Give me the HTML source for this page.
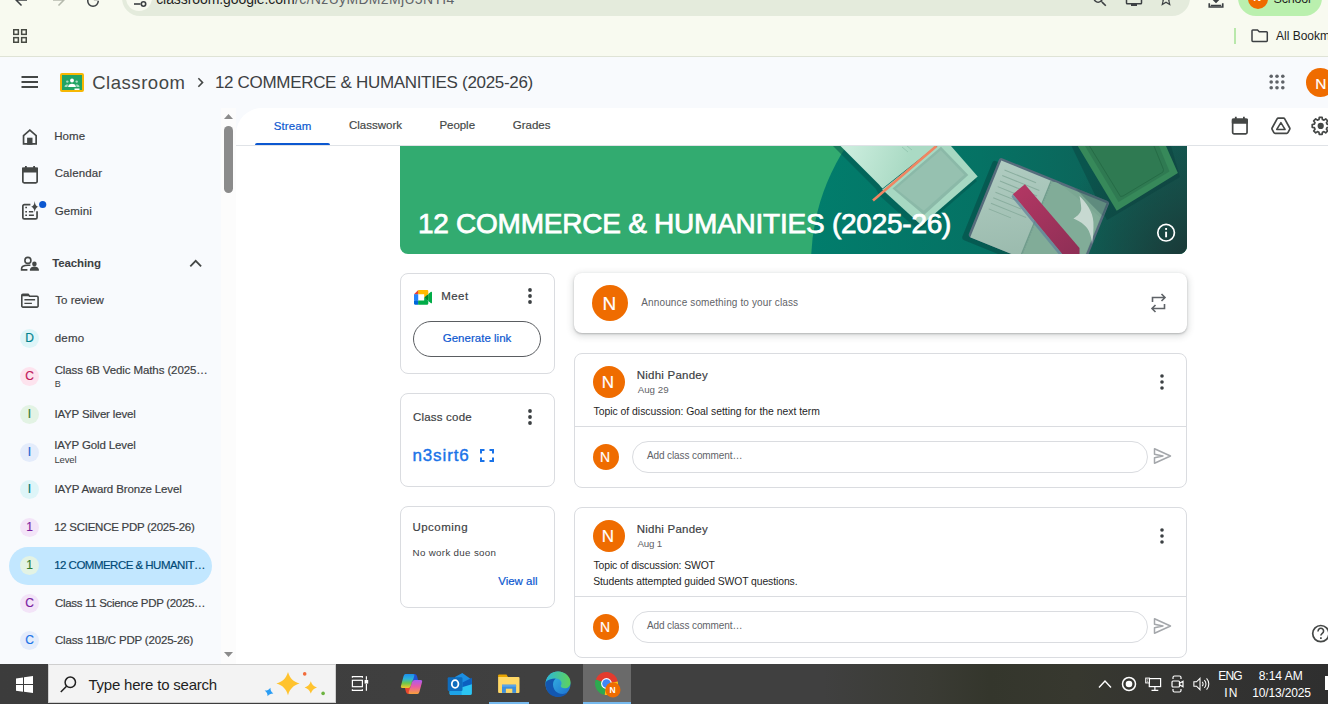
<!DOCTYPE html>
<html lang="en">
<head>
<meta charset="utf-8">
<title>12 COMMERCE &amp; HUMANITIES (2025-26)</title>
<style>
*{box-sizing:border-box;margin:0;padding:0}
html,body{width:1328px;height:704px;overflow:hidden;background:#fff}
body{position:relative;font-family:"Liberation Sans",sans-serif;color:#1f1f1f}
.abs,.t,svg.i{position:absolute}
.t{white-space:nowrap;line-height:0;display:block}
.b{font-weight:700}
.m{-webkit-text-stroke:.18px}
.m2{-webkit-text-stroke:.75px}
.m3{-webkit-text-stroke:.4px}
/* browser chrome */
#chrome{left:0;top:0;width:1328px;height:56px;background:#f8faf0}
#chromeline{left:0;top:56px;width:1328px;height:1px;background:#dfe3d6}
#urlpill{left:122px;top:-20px;width:1068px;height:36px;border-radius:18px;background:#e4ebdc}
#urlic{left:126px;top:-15px;width:26px;height:26px;border-radius:13px;background:#f8faf0}
#profpill{left:1238px;top:-20px;width:84px;height:36px;border-radius:18px;background:#baf0ae}
#profav{left:1248px;top:-11px;width:20px;height:20px;border-radius:50%;background:#ef6c00}
#bmsep{left:1234px;top:28px;width:2px;height:16px;background:#b9e8ab}
/* app */
#app{left:0;top:57px;width:1328px;height:607px;background:#f8fafd}
#track{left:221px;top:108px;width:15px;height:556px;background:#fcfcfc}
#thumb{left:224px;top:126px;width:9px;height:67px;border-radius:4.5px;background:#8b8b8b}
#main{left:236px;top:108px;width:1092px;height:556px;background:#fff;border-top-left-radius:26px}
#tabline{left:236px;top:145px;width:1092px;height:1px;background:#e0e3e7}
#tabsel{left:255px;top:143px;width:75px;height:2px;border-radius:2px 2px 0 0;background:#0b57d0}
#selpill{left:9px;top:547px;width:203px;height:38px;border-radius:19px;background:#c2e7ff}
.cir{position:absolute;width:19px;height:19px;border-radius:50%;left:20px}
.av{position:absolute;border-radius:50%;background:#ef6c00}
.card{position:absolute;background:#fff;border:1px solid #dadce0;border-radius:8px}
.hr{position:absolute;height:1px;background:#dadce0}
.inp{position:absolute;border:1px solid #dadce0;border-radius:16px;height:32px;background:#fff}
#ann{left:574px;top:273px;width:613px;height:60px;border-radius:8px;background:#fff;box-shadow:0 1px 2px rgba(60,64,67,.3),0 2px 6px 2px rgba(60,64,67,.15)}
#genbtn{left:413px;top:321px;width:128px;height:36px;border-radius:18px;border:1px solid #5a5d61;background:#fff}
/* taskbar */
#tb{left:0;top:664px;width:1328px;height:40px;background:linear-gradient(90deg,#3c3c3c 0,#404040 40%,#404040 62%,#3a3b34 70%,#34362c 74.500%,#37382f 81%,#343432 88%,#2f2f2f 100%)}
#tbsearch{left:48px;top:664px;width:288px;height:39px;background:#f3f3f3;border:1px solid #cfcfcf}
#tbactive{left:583px;top:664px;width:48px;height:40px;background:#6a6a6a}
.ul{position:absolute;height:2px;top:702px;background:#76b9ed}
</style>
</head>
<body>
<!-- ===== browser chrome ===== -->
<div id="chrome" class="abs"></div>
<div id="urlpill" class="abs"></div>
<div id="urlic" class="abs"></div>
<div id="profpill" class="abs"></div>
<div id="profav" class="abs"></div>
<div id="bmsep" class="abs"></div>
<div id="chromeline" class="abs"></div>
<!-- back / forward / reload (mostly cropped) -->
<svg class="i" style="left:12px;top:-9.500px" width="18" height="18" viewBox="0 0 24 24"><path d="M20 11H7.83l5.59-5.59L12 4l-8 8 8 8 1.41-1.41L7.83 13H20z" fill="#3c4043"/></svg>
<svg class="i" style="left:50px;top:-9.500px" width="18" height="18" viewBox="0 0 24 24"><path d="M12 4l-1.41 1.41L16.17 11H4v2h12.17l-5.58 5.59L12 20l8-8z" fill="#b5b9ad"/></svg>
<svg class="i" style="left:84px;top:-8.500px" width="18" height="18" viewBox="0 0 24 24"><path d="M17.65 6.35A7.96 7.96 0 0012 4a8 8 0 108 8h-2a6 6 0 11-6-6c1.66 0 3.14.69 4.22 1.78L13 11h7V4z" fill="#3c4043"/></svg>
<svg class="i" style="left:132px;top:-7px" width="16" height="16" viewBox="0 0 16 16"><circle cx="11.5" cy="11" r="2.2" fill="none" stroke="#3c4043" stroke-width="1.6"/><path d="M2 11h6.5" stroke="#3c4043" stroke-width="1.6"/></svg>
<!-- right-side url icons -->
<svg class="i" style="left:1091px;top:-9px" width="18" height="18" viewBox="0 0 24 24"><path d="M15.5 14h-.79l-.28-.27A6.47 6.47 0 0016 9.5 6.5 6.5 0 109.5 16c1.61 0 3.09-.59 4.23-1.57l.27.28v.79l5 4.99L20.490 19zm-6 0C7.010 14 5 11.990 5 9.500S7.010 5 9.500 5 14 7.010 14 9.500 11.990 14 9.500 14z" fill="#3c4043"/></svg>
<svg class="i" style="left:1125px;top:-9.500px" width="18" height="18" viewBox="0 0 24 24"><path d="M21 3H3a2 2 0 00-2 2v11a2 2 0 002 2h5v2h8v-2h5a2 2 0 002-2V5a2 2 0 00-2-2zm0 13H3V5h18z" fill="#3c4043"/></svg>
<svg class="i" style="left:1157px;top:-10px" width="18" height="18" viewBox="0 0 24 24"><path d="M22 9.24l-7.19-.62L12 2 9.190 8.630 2 9.240l5.460 4.730L5.820 21 12 17.270 18.180 21l-1.630-7.030zM12 15.400l-3.760 2.270 1-4.280-3.320-2.880 4.380-.38L12 6.100l1.710 4.040 4.380.38-3.320 2.880 1 4.280z" fill="#3c4043"/></svg>
<svg class="i" style="left:1207px;top:-8.500px" width="18" height="18" viewBox="0 0 24 24"><path d="M5 20h14v-2H5zM19 9h-4V3H9v6H5l7 7z" fill="#3c4043" transform="translate(0,-1)"/><path d="M3 15v5h18v-5" fill="none" stroke="#3c4043" stroke-width="2.2"/></svg>
<!-- bookmarks bar -->
<svg class="i" style="left:13px;top:29px" width="14" height="14" viewBox="0 0 14 14" fill="none" stroke="#474a43" stroke-width="1.5"><rect x=".75" y=".75" width="4.6" height="4.6"/><rect x="8.65" y=".75" width="4.6" height="4.600"/><rect x=".75" y="8.65" width="4.6" height="4.6"/><rect x="8.65" y="8.65" width="4.6" height="4.6"/></svg>
<svg class="i" style="left:1251px;top:29px" width="18" height="14" viewBox="0 0 18 14"><path d="M1.8 1h4.700l1.800 1.800h7.200a.8.800 0 01.800.8v8a.8.800 0 01-.8.800H1.800a.8.800 0 01-.8-.8V1.800a.8.800 0 01.8-.8z" fill="none" stroke="#3c4043" stroke-width="1.5"/></svg>

<!-- ===== app ===== -->
<div id="app" class="abs"></div>
<div id="track" class="abs"></div>
<div id="thumb" class="abs"></div>
<div id="main" class="abs"></div>
<div id="tabline" class="abs"></div>
<div id="tabsel" class="abs"></div>
<div id="selpill" class="abs"></div>
<!-- header -->
<svg class="i" style="left:21px;top:76px" width="18" height="12" viewBox="0 0 18 12"><path d="M.5 1h16.500M.5 6h16.500M.5 11h16.500" stroke="#444746" stroke-width="1.900"/></svg>
<svg class="i" style="left:60px;top:73px" width="24" height="19" viewBox="0 0 24 19"><rect width="24" height="19" rx="2" fill="#f6b704"/><rect x="2" y="2" width="20" height="15" fill="#21a465"/><circle cx="12" cy="7.500" r="1.900" fill="#fff"/><path d="M8.200 13.200c0-1.700 2.500-2.500 3.800-2.500s3.800.8 3.800 2.500v.8H8.200z" fill="#fff"/><circle cx="7.300" cy="8.600" r="1.200" fill="#a8dcc0"/><circle cx="16.700" cy="8.600" r="1.200" fill="#a8dcc0"/><path d="M4.600 13.200c0-1.200 1.700-1.800 2.700-1.800.4 0 .9.100 1.300.2-.7.500-1.100 1.100-1.100 1.900v.5H4.600zM19.400 13.200c0-1.200-1.700-1.800-2.700-1.800-.4 0-.9.100-1.300.2.700.500 1.100 1.100 1.100 1.900v.5h2.900z" fill="#a8dcc0"/><rect x="14.500" y="15.500" width="5" height="1.500" fill="#fff"/></svg>
<svg class="i" style="left:191px;top:73px" width="19" height="19" viewBox="0 0 24 24"><path d="M10 6L8.590 7.410 13.170 12l-4.580 4.590L10 18l6-6z" fill="#444746"/></svg>
<svg class="i" style="left:1269px;top:74px" width="16" height="16" viewBox="0 0 16 16" fill="#5f6368"><circle cx="2.200" cy="2.200" r="1.800"/><circle cx="8" cy="2.200" r="1.800"/><circle cx="13.800" cy="2.200" r="1.800"/><circle cx="2.200" cy="8" r="1.800"/><circle cx="8" cy="8" r="1.800"/><circle cx="13.800" cy="8" r="1.800"/><circle cx="2.200" cy="13.800" r="1.800"/><circle cx="8" cy="13.800" r="1.800"/><circle cx="13.800" cy="13.800" r="1.800"/></svg>
<div class="av" style="left:1306px;top:67.900px;width:28.800px;height:28.800px"></div>
<!-- scrollbar arrows -->
<svg class="i" style="left:224px;top:114px" width="9" height="5" viewBox="0 0 9 5"><path d="M0 5L4.500 0 9 5z" fill="#8b8b8b"/></svg>
<svg class="i" style="left:224px;top:652px" width="9" height="5" viewBox="0 0 9 5"><path d="M0 0L4.500 5 9 0z" fill="#8b8b8b"/></svg>
<!-- sidebar icons -->
<svg class="i" style="left:0;top:108px" width="222" height="220" viewBox="0 108 222 220" fill="none" stroke="#444746" stroke-width="1.700">
<!-- home -->
<path d="M23.550 143.950V135.600L29.850 130.100 36.150 135.600V143.950z"/><rect x="27.100" y="137.700" width="5.400" height="7" fill="#444746" stroke="none"/>
<!-- calendar -->
<rect x="22.850" y="168.300" width="14.300" height="14.600" rx="1.300"/><path d="M22.850 168.300h14.300v3.400h-14.300z" fill="#444746"/><path d="M25.900 166v2.500M34.100 166v2.500" stroke-width="1.800"/>
<!-- gemini -->
<path d="M30.400 204.650H24.300a1.450 1.450 0 00-1.450 1.450v11.300a1.450 1.450 0 001.450 1.450h11.300a1.450 1.450 0 001.450-1.450V211.200"/>
<path d="M25.300 206.800h1.700v1.500h-1.700zM25.300 210.900h1.700v1.500h-1.700zM25.300 214.500h1.700v1.500h-1.700zM28.900 211h4.300v1.400h-4.300zM28.900 214.500h5v1.500h-5z" fill="#444746" stroke="none"/>
<path d="M34.700 200.900c.45 3.900 1.500 5.300 4 5.900-2.500.6-3.550 2-4 5.400-.45-3.400-1.500-4.800-4-5.400 2.500-.6 3.550-2 4-5.900z" fill="#444746" stroke="none"/>
<circle cx="42.700" cy="204.500" r="3.600" fill="#0b57d0" stroke="none"/>
<!-- teaching -->
<circle cx="27.900" cy="260.400" r="3" stroke-width="1.600"/>
<path d="M27.400 269.900H21.600v-1.300c0-2.300 3.300-3.400 6.300-3.400h2.500" stroke-width="1.600"/>
<circle cx="34.400" cy="263.900" r="2.300" fill="#444746" stroke="none"/>
<path d="M29.900 270.700v-1c0-2.100 2.700-3.300 4.500-3.300s4.500 1.200 4.500 3.300v1z" fill="#444746" stroke="none"/>
<!-- to review -->
<path d="M21.800 295.500a1.100 1.100 0 011.100-1.100h5.200l1.600 1.900h7.300a1.100 1.100 0 011.100 1.100v8.600a1.100 1.100 0 01-1.100 1.100H22.900a1.100 1.100 0 01-1.100-1.100z" stroke-width="1.600"/>
<path d="M21.800 296.300V294.400h6.300l1.600 1.900z" fill="#444746" stroke="none"/>
<path d="M24.400 299.700h10.700M24.400 303.400h7.500" stroke-width="1.400"/>
<!-- chevron up -->
<path d="M190.300 266.300l5.400-5.500 5.400 5.500" stroke-width="1.800"/>
</svg>
<div class="cir" style="top:329px;background:#def5f8"></div>
<div class="cir" style="top:367px;background:#fde3ee"></div>
<div class="cir" style="top:405px;background:#e3f3e4"></div>
<div class="cir" style="top:443px;background:#e4ecfb"></div>
<div class="cir" style="top:480px;background:#def5f8"></div>
<div class="cir" style="top:518px;background:#f3e4f8"></div>
<div class="cir" style="top:556px;background:#e3f3e4"></div>
<div class="cir" style="top:594px;background:#f3e4f8"></div>
<div class="cir" style="top:631px;background:#e4ecfb"></div>
<!-- tab bar right icons -->
<svg class="i" style="left:1224px;top:108px" width="104" height="36" viewBox="1224 108 104 36" fill="none" stroke="#444746" stroke-width="1.700" stroke-linejoin="round">
<rect x="1232.650" y="119.300" width="14.400" height="14.500" rx="1.300"/><path d="M1232.650 119.300h14.400v3.500h-14.400z" fill="#444746"/><path d="M1235.800 116.800v2.600M1243.900 116.800v2.600" stroke-width="1.800"/>
<path d="M1278.300 118.100h5.200q.8 0 1.200.7l5 9.200q.4.700 0 1.400l-1.800 3.200q-.4.700-1.200.7h-11.600q-.8 0-1.200-.7l-1.800-3.200q-.4-.7 0-1.400l5-9.200q.4-.7 1.200-.7z"/>
<path d="M1280.900 122.600l4.200 6.900h-8.400z" stroke-width="1.500"/>
<path d="M1318.96 119.53L1319.29 117.42L1322.11 117.42L1322.44 119.53L1323.97 120.17L1325.70 118.90L1327.70 120.90L1326.43 122.63L1327.07 124.16L1329.18 124.49L1329.18 127.31L1327.07 127.64L1326.43 129.17L1327.70 130.90L1325.70 132.90L1323.97 131.63L1322.44 132.27L1322.11 134.38L1319.29 134.38L1318.96 132.27L1317.43 131.63L1315.70 132.90L1313.70 130.90L1314.97 129.17L1314.33 127.64L1312.22 127.31L1312.22 124.49L1314.33 124.16L1314.97 122.63L1313.70 120.90L1315.70 118.90L1317.43 120.17z" stroke-width="1.700"/><circle cx="1320.700" cy="125.900" r="3.100" fill="#444746" stroke="none"/>
</svg>

<svg class="i" style="left:400px;top:146px;border-radius:0 0 8px 8px" width="787" height="108" viewBox="400 146 787 108">
<defs>
<linearGradient id="tg" x1="811" y1="0" x2="1187" y2="0" gradientUnits="userSpaceOnUse"><stop offset="0" stop-color="#017d6c"/><stop offset=".45" stop-color="#057264"/><stop offset="1" stop-color="#125a52"/></linearGradient>
<radialGradient id="dk" cx="1200" cy="270" r="150" gradientUnits="userSpaceOnUse"><stop offset="0" stop-color="#1c2f30" stop-opacity=".95"/><stop offset=".5" stop-color="#1c3a38" stop-opacity=".5"/><stop offset="1" stop-color="#1c3a38" stop-opacity="0"/></radialGradient>
<linearGradient id="lp" x1="850" y1="150" x2="905" y2="170" gradientUnits="userSpaceOnUse"><stop offset="0" stop-color="#c9ecdc"/><stop offset="1" stop-color="#aadac4"/></linearGradient>
<linearGradient id="lpg" x1="0" y1="0" x2="50" y2="85" gradientUnits="userSpaceOnUse"><stop offset="0" stop-color="#b1cdc2"/><stop offset="1" stop-color="#9bbbae"/></linearGradient><linearGradient id="bmk" x1="1020" y1="185" x2="1075" y2="254" gradientUnits="userSpaceOnUse"><stop offset="0" stop-color="#b23763"/><stop offset="1" stop-color="#8f2f56"/></linearGradient><clipPath id="bk2"><rect x="0" y="0" width="118.600" height="85.300" rx="3"/></clipPath>
</defs>
<rect x="400" y="146" width="787" height="108" fill="#32ab70"/>
<circle cx="1025" cy="264" r="214" fill="url(#tg)"/>
<rect x="400" y="146" width="787" height="108" fill="url(#dk)"/>
<!-- book 1 (mint, open) -->
<path d="M833 146l43 43 3 6 40 36 58-50-31-35z" fill="#04564f" opacity=".55"/>
<path d="M840.500 146L879 184.500q2 2.500 3.500 4L936 146z" fill="url(#lp)"/>
<path d="M882.200 189.400l39.200 35.800 56.300-48.600L951 146h-13.500z" fill="#a7d8c2"/>
<path d="M892.500 188.600L941 146.800l27.300 28.100L924 215z" fill="#8bb9a8"/>
<path d="M896 188.800l44.800-38.500 23.500 24.500-40.500 36z" fill="#96c1b0"/>
<path d="M936.500 146L873 200.500" stroke="#f08562" stroke-width="2.600"/>
<path d="M902 147l6 5M907 146l5 4" stroke="#8fc3ad" stroke-width=".8"/>
<!-- book 3 (green, closed) -->
<path d="M1071.500 146l35.500 74 73-43-9-31z" fill="#0a3f3b" opacity=".42"/>
<path d="M1077.800 146l38.900 64.700L1177.900 173 1166 146z" fill="#37895a"/>
<path d="M1085 146l33.500 56 51-30.500-10.500-25.500z" fill="#2f7a52"/>
<path d="M1089.500 146l31 50.500 2.500-.5 40-24 .5-2.500-9.500-23.500" fill="none" stroke="#256a45" stroke-width=".9"/>
<!-- book 2 (open, bookmark) -->
<g transform="translate(999.900 157.300) rotate(22.050)">
<rect x="-5" y="5" width="118.600" height="85.300" rx="3" fill="#073f3c" opacity=".45"/>
<rect x="0" y="0" width="118.600" height="85.300" rx="3" fill="#566c7c"/>
<g clip-path="url(#bk2)">
<rect x="2.500" y="2.500" width="55" height="84" fill="url(#lpg)"/>
<rect x="57.500" y="2.500" width="58.600" height="84" fill="#7ba793"/>
<path d="M57.500 4c3-3 8-2 14 0 10 3 24 7 44 14V86h-58z" fill="#81ac98"/>
<path d="M80 0l38 16V0z" fill="#2c5a58" opacity=".35"/>
<path d="M56.500 2.500v84" stroke="#6f9c8b" stroke-width="1.500"/>
<path d="M9 10h34M9 16h40M9 22h40M9 28h36M9 34h40M9 40h30M9 46h38M9 52h24" stroke="#8aae9f" stroke-width="1"/>
</g>
</g>
<path d="M1079.500 196C1086 202 1093 212 1093.400 222 1093.800 230 1093 238 1092 244 1091.500 236 1089 229 1084.700 225.400 1081 222 1077 220 1073.400 218.500 1078 216 1081.500 212 1081.200 208 1081 203 1080 199 1079.500 196z" fill="#d3e0da" opacity=".85"/>
<path d="M1024.900 184.200L1012.800 194.200 1062.200 254H1079.500v-6.100z" fill="url(#bmk)"/>
<path d="M1012.800 194.200l-1.300 2.600L1058.500 254h3.700z" fill="#5f7f9a" opacity=".7"/>
<!-- info -->
<circle cx="1166.100" cy="232.700" r="8.300" fill="none" stroke="#fff" stroke-width="1.700"/>
<rect x="1165.150" y="231.700" width="1.900" height="5.600" fill="#fff"/><rect x="1165.150" y="228" width="1.900" height="1.900" fill="#fff"/>
</svg>

<!-- cards -->
<div class="card" style="left:400px;top:273px;width:155px;height:101px"></div>
<div id="genbtn" class="abs"></div>
<div class="card" style="left:400px;top:393px;width:155px;height:94px"></div>
<div class="card" style="left:400px;top:506px;width:155px;height:102px"></div>
<div id="ann" class="abs"></div>
<div class="av" style="left:592px;top:285px;width:36px;height:36px"></div>
<div class="card" style="left:574px;top:353px;width:613px;height:135px"></div>
<div class="hr" style="left:575px;top:426px;width:611px"></div>
<div class="av" style="left:593px;top:366px;width:32px;height:32px"></div>
<div class="av" style="left:593px;top:444px;width:26px;height:26px"></div>
<div class="inp" style="left:632px;top:441px;width:516px"></div>
<div class="card" style="left:574px;top:507px;width:613px;height:151px"></div>
<div class="hr" style="left:575px;top:596px;width:611px"></div>
<div class="av" style="left:593px;top:520px;width:32px;height:32px"></div>
<div class="av" style="left:593px;top:614px;width:26px;height:26px"></div>
<div class="inp" style="left:632px;top:611px;width:516px"></div>
<!-- meet logo -->
<svg class="i" style="left:413.500px;top:290px" width="18" height="14.800" viewBox="0 0 87.500 72"><path fill="#00832d" d="M49.500 36l8.530 9.750 11.470 7.330 2-17.020-2-16.640-11.690 6.440z"/><path fill="#0066da" d="M0 51.500V66c0 3.315 2.685 6 6 6h14.500l3-10.960-3-9.540-9.950-3z"/><path fill="#e94235" d="M20.500 0L0 20.500l10.550 3 9.950-3 2.950-9.410z"/><path fill="#2684fc" d="M20.500 20.500H0v31h20.500z"/><path fill="#00ac47" d="M82.600 8.680L69.500 19.420v33.660l13.160 10.790c1.970 1.540 4.850.135 4.850-2.370V11c0-2.535-2.945-3.925-4.910-2.320zM49.500 36v15.500h-29V72h43c3.315 0 6-2.685 6-6V53.080z"/><path fill="#ffba00" d="M63.500 0H20.500v20.500h29V36l20-16.570V6c0-3.315-2.685-6-6-6z"/></svg>
<!-- 3-dot menus -->
<svg class="i" style="left:526px;top:287px" width="8" height="18" viewBox="0 0 8 18" fill="#3c4043"><circle cx="4" cy="3" r="1.900"/><circle cx="4" cy="9" r="1.900"/><circle cx="4" cy="15" r="1.900"/></svg>
<svg class="i" style="left:526px;top:408px" width="8" height="18" viewBox="0 0 8 18" fill="#3c4043"><circle cx="4" cy="3" r="1.900"/><circle cx="4" cy="9" r="1.900"/><circle cx="4" cy="15" r="1.900"/></svg>
<svg class="i" style="left:1157.500px;top:372.500px" width="8" height="18" viewBox="0 0 8 18" fill="#3c4043"><circle cx="4" cy="3" r="1.800"/><circle cx="4" cy="9" r="1.800"/><circle cx="4" cy="15" r="1.800"/></svg>
<svg class="i" style="left:1157.500px;top:526.500px" width="8" height="18" viewBox="0 0 8 18" fill="#3c4043"><circle cx="4" cy="3" r="1.800"/><circle cx="4" cy="9" r="1.800"/><circle cx="4" cy="15" r="1.800"/></svg>
<!-- fullscreen -->
<svg class="i" style="left:480px;top:449px" width="14" height="13" viewBox="0 0 14 13" fill="none" stroke="#1a73e8" stroke-width="2"><path d="M1 4.500V1h3.500M9.500 1H13v3.500M13 8.500V12H9.500M4.500 12H1V8.500"/></svg>
<!-- repeat -->
<svg class="i" style="left:1150px;top:293px" width="17" height="20" viewBox="0 0 17 20" fill="none" stroke="#5f6368" stroke-width="1.600"><path d="M2.500 9V4.500h12M11.500 1l3.500 3.500L11.500 8"/><path d="M14.500 11v4.500h-12M5.500 12L2 15.500 5.500 19"/></svg>
<!-- send -->
<svg class="i" style="left:1153px;top:447px" width="19" height="18" viewBox="0 0 19 18" fill="none" stroke="#a4a7ab" stroke-width="1.500" stroke-linejoin="round"><path d="M1.500 1.800L17.500 9 1.500 16.200V10.800L10 9 1.500 7.200z"/></svg>
<svg class="i" style="left:1153px;top:617px" width="19" height="18" viewBox="0 0 19 18" fill="none" stroke="#a4a7ab" stroke-width="1.500" stroke-linejoin="round"><path d="M1.500 1.800L17.500 9 1.500 16.200V10.800L10 9 1.500 7.200z"/></svg>
<!-- help -->
<svg class="i" style="left:1308px;top:621px" width="25" height="25" viewBox="1308 621 25 25" fill="none" stroke="#444746" stroke-width="1.700"><circle cx="1320.800" cy="633.600" r="8.100"/><path d="M1318.200 631.500a2.700 2.700 0 115.300 0c0 1.800-2.600 2-2.600 4.100" stroke-width="1.600"/><path d="M1320.900 637.300v1.800" stroke-width="1.700"/></svg>

<!-- ===== taskbar ===== -->
<div id="tb" class="abs"></div>
<div id="tbsearch" class="abs"></div>
<div id="tbactive" class="abs"></div>
<div class="ul" style="left:489px;width:40px"></div>
<div class="ul" style="left:583px;width:48px"></div>
<!-- windows logo -->
<svg class="i" style="left:16px;top:676px" width="17" height="17" viewBox="0 0 17 17" fill="#fff"><path d="M0 2.400L7 1.400v6.700H0zM8 1.250L17 0v8.100H8zM0 9.100h7v6.700l-7-1zM8 9.100h9V17l-9-1.250z"/></svg>
<!-- search -->
<svg class="i" style="left:60px;top:676px" width="17" height="17" viewBox="0 0 17 17" fill="none" stroke="#1f1f1f" stroke-width="1.500"><circle cx="10.300" cy="6.300" r="5.200"/><path d="M6.500 10.200L.8 16"/></svg>
<!-- sparkle -->
<svg class="i" style="left:260px;top:668px" width="70" height="34" viewBox="260 668 70 34"><path d="M288 672.0C289.95 678.38 293.22 681.65 299.6 683.6C293.22 685.55 289.95 688.82 288 695.2C286.05 688.82 282.78 685.55 276.4 683.6C282.78 681.65 286.05 678.38 288 672.0z" fill="#ffc32e"/><path d="M310.8 681.1999999999999C311.84 684.61 313.59 686.36 317.0 687.4C313.59 688.44 311.84 690.19 310.8 693.6C309.76 690.19 308.01 688.44 304.6 687.4C308.01 686.36 309.76 684.61 310.8 681.1999999999999z" fill="#ffc32e"/><path d="M269 687.4C269.77 689.93 271.07 691.23 273.6 692C271.07 692.77 269.77 694.07 269 696.6C268.23 694.07 266.93 692.77 264.4 692C266.93 691.23 268.23 689.93 269 687.4z" fill="#2a9df4" transform="rotate(18 269 692)"/><circle cx="304.700" cy="673.900" r="1.800" fill="#f26b3a"/><circle cx="323.100" cy="693.400" r="1.800" fill="#6cb33f"/></svg>
<!-- task view -->
<svg class="i" style="left:350px;top:675px" width="20" height="17" viewBox="350 675 20 17" fill="none" stroke="#fff" stroke-width="1.200"><rect x="352.400" y="680.300" width="10" height="6.400"/><path d="M352.400 677.800v-1.200h10v1.200M352.400 689.200v1.200h10v-1.200M366.400 676.200v3.500M366.400 684v6.800"/><rect x="364.600" y="680" width="3.600" height="3.600" fill="#fff" stroke="none"/></svg>
<!-- copilot -->
<svg class="i" style="left:399.900px;top:673.200px" width="23" height="22" viewBox="0 0 23 22"><defs><linearGradient id="cp1" x1="0" y1="0" x2="0" y2="1"><stop offset="0" stop-color="#1b8fee"/><stop offset=".35" stop-color="#2db3d8"/><stop offset=".65" stop-color="#6cc74a"/><stop offset="1" stop-color="#f8c62b"/></linearGradient><linearGradient id="cp2" x1="0" y1="0" x2="0" y2="1"><stop offset="0" stop-color="#a95cf0"/><stop offset=".45" stop-color="#e85aa8"/><stop offset="1" stop-color="#f9a13a"/></linearGradient></defs><path d="M11 1H14.500Q16.500 1 17 3L18.200 7.500H13z" fill="#2052d2"/><path d="M12 21H8.500Q6.500 21 6 19L4.800 14.500H10z" fill="#e8482e"/><path d="M5.500 1H13Q15 1 14.300 3L11 13Q10.300 15 8.300 15H2.500Q.3 15 1 12.800L3.600 3Q4.200 1 5.500 1z" fill="url(#cp1)"/><path d="M17.500 21H10Q8 21 8.700 19L12 9Q12.700 7 14.700 7H20.500Q22.700 7 22 9.200L19.400 19Q18.800 21 17.500 21z" fill="url(#cp2)"/><path d="M12.300 8.200L10.800 13.600 10.600 13.900 12.100 8.500z" fill="#3a3a3a" opacity=".5"/></svg>
<!-- outlook -->
<svg class="i" style="left:447px;top:672px" width="26" height="24" viewBox="447 672 26 24"><path d="M455 677l7.300-4 9.500 6.800v13.700H455z" fill="#1b8ee2"/><path d="M462.500 682.500l9.300-4.700v6.400l-9.300 6.600z" fill="#0b5fc0"/><path d="M449.600 691l22.200-6.800v9.400q0 1.500-1.500 1.500H451.100q-1.500 0-1.500-1.500z" fill="#2cc5f2"/><path d="M449.600 691l12-3.700v7.800H451.100q-1.500 0-1.500-1.500z" fill="#1da3e8"/><rect x="447.700" y="677.200" width="14.800" height="13.700" rx="1.200" fill="#0f6cbd"/><ellipse cx="455.100" cy="684" rx="3.300" ry="3.800" fill="none" stroke="#fff" stroke-width="1.800"/></svg>
<!-- explorer -->
<svg class="i" style="left:497px;top:673px" width="24" height="21" viewBox="497 673 24 21"><path d="M498.100 675.600q0-1 1-1h7.400l1.500 2.400h-9.900z" fill="#e8a400"/><path d="M498.100 677h20.400q1 0 1 1v13.900q0 1-1 1H499.100q-1 0-1-1z" fill="#ffd866"/><path d="M498.100 677h9.900l-1.500-2.400" fill="#f4b400" opacity=".0"/><path d="M502 684.700h14.100v8.200H502z" fill="#3d8fdc"/><path d="M502 684.700h14.100v2H502z" fill="#5aa6ea"/><path d="M505.900 688.700h6.400v4.200h-6.400z" fill="#ffd866"/></svg>
<!-- edge -->
<svg class="i" style="left:545px;top:671px" width="26" height="26" viewBox="0 0 26 26"><defs><linearGradient id="eg1" x1="0" y1="0" x2="1" y2="1"><stop offset="0" stop-color="#39c3e4"/><stop offset="1" stop-color="#1c6dd0"/></linearGradient><linearGradient id="eg2" x1="0" y1="0" x2="1" y2="0"><stop offset="0" stop-color="#2bb7d9"/><stop offset="1" stop-color="#5fd35a"/></linearGradient></defs><circle cx="13" cy="13" r="12.500" fill="url(#eg1)"/><path d="M.8 11C2 4.500 7 .5 13 .5c7 0 12.500 5 12.500 11 0 3.500-2.500 5.800-5.800 5.800-2.700 0-4-1.200-4-2.300 0-.9.800-1.300.8-2.800 0-2.400-2.300-4.700-5.800-4.700C6.500 7.500 2.500 9 .8 11z" fill="url(#eg2)"/><path d="M8 13.500c0 5 3.800 9.500 9.500 9.500 2.200 0 4-.6 5.500-1.700-2.300 3-5.800 4.700-10 4.700C6 26 .5 20.500.5 13.500c0-.9.100-1.700.3-2.500 1.700-2 5.700-3.500 9.900-3.500-1.700 1.300-2.700 3.600-2.700 6z" fill="#1357b0"/></svg>
<!-- chrome -->
<svg class="i" style="left:595px;top:672px" width="26" height="26" viewBox="0 0 26 26"><path d="M11.500 11.500L.69 7.570A11.500 11.500 0 0122.830 9.500z" fill="#e33b2e"/><path d="M11.500 11.500L22.830 9.500A11.500 11.500 0 019.500 22.830z" fill="#fbc116"/><path d="M11.500 11.500L9.500 22.830A11.500 11.500 0 01.69 7.570z" fill="#2da94f"/><circle cx="11.500" cy="11.500" r="5.400" fill="#fff"/><circle cx="11.500" cy="11.500" r="4.300" fill="#3f86f5"/><circle cx="17.900" cy="17.900" r="7.600" fill="#ef6c00"/></svg>
<!-- tray -->
<svg class="i" style="left:1098px;top:679px" width="14" height="10" viewBox="0 0 14 10" fill="none" stroke="#fff" stroke-width="1.400"><path d="M1 8.500l6-6.500 6 6.500"/></svg>
<svg class="i" style="left:1121px;top:676px" width="16" height="16" viewBox="0 0 16 16"><circle cx="8" cy="8" r="6.500" fill="none" stroke="#fff" stroke-width="1.500"/><circle cx="8" cy="8" r="3.300" fill="#fff"/></svg>
<svg class="i" style="left:1144px;top:676px" width="18" height="16" viewBox="1144 676 18 16" fill="none" stroke="#fff" stroke-width="1.200"><rect x="1149.300" y="678.600" width="11.300" height="8"/><path d="M1154.900 686.600v3.500M1151.500 690.300h6.800"/><rect x="1145.700" y="678.100" width="3.800" height="4.800" fill="#3a3a36" stroke-width="1"/><path d="M1146.800 679.800h1.600M1146.800 681.300h1.600" stroke-width=".7"/></svg>
<svg class="i" style="left:1171px;top:675px" width="14" height="18" viewBox="0 0 14 18" fill="none" stroke="#fff" stroke-width="1.200"><path d="M2 4V2.500a1.500 1.500 0 011.500-1.500h5a1.500 1.500 0 011.500 1.500V4M2 14v1.500a1.500 1.500 0 001.500 1.500h5a1.500 1.500 0 001.500-1.500V14"/><rect x="1" y="6" width="7.500" height="6" rx="1"/><path d="M8.500 8.200l3.500-2v5.600l-3.500-2z"/></svg>
<svg class="i" style="left:1192.500px;top:677px" width="17.500" height="14" viewBox="0 0 20 16" fill="none" stroke="#fff" stroke-width="1.200"><path d="M1 5.500h3l4-4v13l-4-4H1z"/><path d="M10.500 5.500a3.500 3.500 0 010 5M13 3.500a6.500 6.500 0 010 9M15.500 1.500a9.500 9.500 0 010 13"/></svg>
<div class="abs" style="left:1325px;top:676px;width:3px;height:14px;background:#fff"></div>

<!-- text -->
<span class="t m" style="left:20px;width:19px;text-align:center;top:337.94px;font-size:12px;color:#00838f">D</span>
<span class="t m" style="left:20px;width:19px;text-align:center;top:375.94px;font-size:12px;color:#c2185b">C</span>
<span class="t m" style="left:20px;width:19px;text-align:center;top:413.94px;font-size:12px;color:#2e7d32">I</span>
<span class="t m" style="left:20px;width:19px;text-align:center;top:451.94px;font-size:12px;color:#1967d2">I</span>
<span class="t m" style="left:20px;width:19px;text-align:center;top:488.94px;font-size:12px;color:#00796b">I</span>
<span class="t m" style="left:20px;width:19px;text-align:center;top:526.94px;font-size:12px;color:#7b1fa2">1</span>
<span class="t m" style="left:20px;width:19px;text-align:center;top:564.94px;font-size:12px;color:#2e7d32">1</span>
<span class="t m" style="left:20px;width:19px;text-align:center;top:602.94px;font-size:12px;color:#7b1fa2">C</span>
<span class="t m" style="left:20px;width:19px;text-align:center;top:639.94px;font-size:12px;color:#1a73e8">C</span>
<span class="t" style="left:156.20px;top:-0.75px;font-size:14px;color:#1f1f1f;letter-spacing:-0.084px;">classroom.google.com</span>
<span class="t" style="left:295.10px;top:-0.75px;font-size:14px;color:#5f6368;letter-spacing:0.333px;">/c/NzUyMDM2MjU5NTI4</span>
<span class="t b" style="left:1253.20px;top:-2.71px;font-size:11px;color:#fff;">N</span>
<span class="t" style="left:1273.56px;top:-1.23px;font-size:12.5px;color:#1f1f1f;letter-spacing:-0.192px;">School</span>
<span class="t" style="left:1276.00px;top:35.94px;font-size:12px;color:#1f1f1f;">All Bookmarks</span>
<span class="t" style="left:92.20px;top:82.69px;font-size:18.5px;color:#444746;letter-spacing:0.540px;">Classroom</span>
<span class="t" style="left:214.90px;top:83.21px;font-size:17px;color:#3c4043;letter-spacing:-0.315px;">12 COMMERCE &amp; HUMANITIES (2025-26)</span>
<span class="t m" style="left:1315.20px;top:83.73px;font-size:15.5px;color:#fff;">N</span>
<span class="t m" style="left:54.18px;top:136.12px;font-size:11.5px;color:#3c4043;letter-spacing:0.107px;">Home</span>
<span class="t m" style="left:54.74px;top:173.12px;font-size:11.5px;color:#3c4043;letter-spacing:0.080px;">Calendar</span>
<span class="t m" style="left:54.74px;top:211.12px;font-size:11.5px;color:#3c4043;letter-spacing:0.112px;">Gemini</span>
<span class="t b" style="left:52.24px;top:263.12px;font-size:11.5px;color:#3c4043;letter-spacing:-0.137px;">Teaching</span>
<span class="t m" style="left:55.30px;top:300.12px;font-size:11.5px;color:#3c4043;">To review</span>
<span class="t m" style="left:54.74px;top:338.12px;font-size:11.5px;color:#3c4043;letter-spacing:0.187px;">demo</span>
<span class="t m" style="left:54.66px;top:370.12px;font-size:11.5px;color:#3c4043;letter-spacing:-0.111px;">Class 6B Vedic Maths (2025…</span>
<span class="t" style="left:54.74px;top:383.98px;font-size:9px;color:#3c4043;">B</span>
<span class="t m" style="left:54.42px;top:414.12px;font-size:11.5px;color:#3c4043;letter-spacing:-0.155px;">IAYP Silver level</span>
<span class="t m" style="left:54.18px;top:445.12px;font-size:11.5px;color:#3c4043;letter-spacing:-0.126px;">IAYP Gold Level</span>
<span class="t" style="left:54.42px;top:459.81px;font-size:9.5px;color:#3c4043;letter-spacing:-0.140px;">Level</span>
<span class="t m" style="left:54.42px;top:489.12px;font-size:11.5px;color:#3c4043;letter-spacing:-0.138px;">IAYP Award Bronze Level</span>
<span class="t m" style="left:54.18px;top:527.12px;font-size:11.5px;color:#3c4043;letter-spacing:-0.271px;">12 SCIENCE PDP (2025-26)</span>
<span class="t m" style="left:54.18px;top:565.12px;font-size:11.5px;color:#004a77;letter-spacing:-0.518px;">12 COMMERCE &amp; HUMANIT…</span>
<span class="t m" style="left:54.90px;top:603.12px;font-size:11.5px;color:#3c4043;letter-spacing:-0.308px;">Class 11 Science PDP (2025…</span>
<span class="t m" style="left:54.98px;top:640.12px;font-size:11.5px;color:#3c4043;letter-spacing:-0.187px;">Class 11B/C PDP (2025-26)</span>
<span class="t m" style="left:273.74px;top:126.12px;font-size:11.5px;color:#0b57d0;letter-spacing:0.112px;">Stream</span>
<span class="t m" style="left:349.00px;top:125.12px;font-size:11.5px;color:#444746;">Classwork</span>
<span class="t m" style="left:439.38px;top:125.12px;font-size:11.5px;color:#444746;letter-spacing:-0.032px;">People</span>
<span class="t m" style="left:512.80px;top:125.12px;font-size:11.5px;color:#444746;">Grades</span>
<span class="t m2" style="left:417.90px;top:224.40px;font-size:28px;color:#fff;letter-spacing:-0.242px;">12 COMMERCE &amp; HUMANITIES (2025-26)</span>
<span class="t m" style="left:441.28px;top:296.12px;font-size:11.5px;color:#3c4043;letter-spacing:0.427px;">Meet</span>
<span class="t m" style="left:442.74px;top:338.12px;font-size:11.5px;color:#0b57d0;letter-spacing:0.013px;">Generate link</span>
<span class="t m" style="left:412.92px;top:417.12px;font-size:11.5px;color:#3c4043;letter-spacing:0.204px;">Class code</span>
<span class="t m3" style="left:412.44px;top:456.21px;font-size:17px;color:#1a73e8;letter-spacing:0.880px;">n3sirt6</span>
<span class="t m" style="left:412.44px;top:527.12px;font-size:11.5px;color:#3c4043;letter-spacing:0.480px;">Upcoming</span>
<span class="t" style="left:412.60px;top:552.72px;font-size:9.75px;color:#3c4043;letter-spacing:0.320px;">No work due soon</span>
<span class="t m" style="left:498.20px;top:581.12px;font-size:11.5px;color:#0b57d0;">View all</span>
<span class="t m" style="left:602.40px;top:303.52px;font-size:19px;color:#fff;">N</span>
<span class="t" style="left:641.34px;top:302.64px;font-size:10px;color:#5f6368;letter-spacing:0.124px;">Announce something to your class</span>
<span class="t m" style="left:601.76px;top:383.21px;font-size:17px;color:#fff;">N</span>
<span class="t m" style="left:636.74px;top:375.12px;font-size:11.5px;color:#3c4043;letter-spacing:0.233px;">Nidhi Pandey</span>
<span class="t" style="left:637.70px;top:389.72px;font-size:9.75px;color:#5f6368;">Aug 29</span>
<span class="t" style="left:593.46px;top:411.50px;font-size:10.4px;color:#1f1f1f;letter-spacing:-0.010px;">Topic of discussion: Goal setting for the next term</span>
<span class="t m" style="left:599.92px;top:457.25px;font-size:14px;color:#fff;">N</span>
<span class="t" style="left:646.92px;top:455.64px;font-size:10px;color:#5f6368;letter-spacing:-0.104px;">Add class comment…</span>
<span class="t m" style="left:601.76px;top:537.21px;font-size:17px;color:#fff;">N</span>
<span class="t m" style="left:636.74px;top:529.12px;font-size:11.5px;color:#3c4043;letter-spacing:0.233px;">Nidhi Pandey</span>
<span class="t" style="left:637.46px;top:543.72px;font-size:9.75px;color:#5f6368;letter-spacing:-0.180px;">Aug 1</span>
<span class="t" style="left:593.46px;top:565.50px;font-size:10.4px;color:#1f1f1f;letter-spacing:-0.110px;">Topic of discussion: SWOT</span>
<span class="t" style="left:593.22px;top:581.50px;font-size:10.4px;color:#1f1f1f;letter-spacing:-0.100px;">Students attempted guided SWOT questions.</span>
<span class="t m" style="left:599.92px;top:627.25px;font-size:14px;color:#fff;">N</span>
<span class="t" style="left:646.92px;top:625.63px;font-size:10px;color:#5f6368;letter-spacing:-0.104px;">Add class comment…</span>
<span class="t" style="left:88.44px;top:684.90px;font-size:15px;color:#1f1f1f;letter-spacing:-0.213px;">Type here to search</span>
<span class="t b" style="left:609.38px;top:690.15px;font-size:8.5px;color:#fff;">N</span>
<span class="t" style="left:1218.20px;top:675.94px;font-size:12px;color:#fff;letter-spacing:-0.800px;">ENG</span>
<span class="t" style="left:1224.30px;top:692.94px;font-size:12px;color:#fff;letter-spacing:1.200px;">IN</span>
<span class="t" style="left:1258.70px;top:675.94px;font-size:12px;color:#fff;">8:14 AM</span>
<span class="t" style="left:1252.28px;top:692.94px;font-size:12px;color:#fff;letter-spacing:-0.142px;">10/13/2025</span>
</body>
</html>
